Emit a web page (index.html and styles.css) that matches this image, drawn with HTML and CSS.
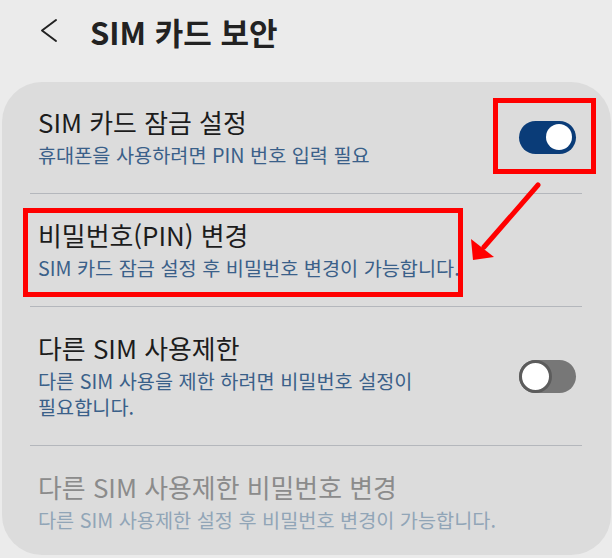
FILE: index.html
```html
<!DOCTYPE html>
<html lang="ko">
<head>
<meta charset="UTF-8" />
<title>SIM 카드 보안</title>
<link rel="stylesheet" href="styles.css">
</head>
<body>
<div class="screen">
    <div class="header">
        <svg class="back-icon" width="18" height="26" viewBox="0 0 18 26">
            <polyline points="16,2 2,12.5 16,23" fill="none" stroke="#222" stroke-width="2" stroke-linecap="round" stroke-linejoin="round"/>
        </svg>
        <h1>SIM 카드 보안</h1>
    </div>

    <div class="card">
        <div class="row">
            <div class="row-text">
                <div class="row-title">SIM 카드 잠금 설정</div>
                <div class="row-sub">휴대폰을 사용하려면 PIN 번호 입력 필요</div>
            </div>
            <div class="switch on"><span class="knob"></span></div>
        </div>
        <div class="row">
            <div class="row-text">
                <div class="row-title">비밀번호(PIN) 변경</div>
                <div class="row-sub">SIM 카드 잠금 설정 후 비밀번호 변경이 가능합니다.</div>
            </div>
        </div>
        <div class="row">
            <div class="row-text narrow">
                <div class="row-title">다른 SIM 사용제한</div>
                <div class="row-sub">다른 SIM 사용을 제한 하려면 비밀번호 설정이 필요합니다.</div>
            </div>
            <div class="switch off"><span class="knob"></span></div>
        </div>
        <div class="row disabled">
            <div class="row-text">
                <div class="row-title">다른 SIM 사용제한 비밀번호 변경</div>
                <div class="row-sub">다른 SIM 사용제한 설정 후 비밀번호 변경이 가능합니다.</div>
            </div>
        </div>
    </div>

    <!-- red annotation marks drawn over the screenshot -->
    <svg class="marks" width="612" height="558" viewBox="0 0 612 558">
        <rect x="495.5" y="100.5" width="98" height="71" fill="none" stroke="#ff0000" stroke-width="5"/>
        <rect x="25.5" y="210.5" width="435" height="84" fill="none" stroke="#ff0000" stroke-width="5"/>
        <line x1="538" y1="185" x2="484" y2="247" stroke="#ff0000" stroke-width="5" stroke-linecap="round"/>
        <polygon points="473,260 471,239 494,257" fill="#ff0000"/>
    </svg>
</div>
</body>
</html>
```

FILE: styles.css
```css
* {margin: 0; padding: 0; box-sizing: border-box;}
body {
    font-family: "Noto Sans CJK KR", "Noto Sans", sans-serif;
    background: #ebebeb;
    color: #1c1c1c;
}
.screen {
    position: relative;
    width: 612px;
    height: 558px;
    overflow: hidden;
}
.header {
    height: 62px;
    display: flex;
    align-items: center;
    padding-left: 40px;
    gap: 32px;
}
.header h1 {
    font-size: 31px;
    font-weight: 700;
    color: #222;
    line-height: 1;
}
.card {
    margin: 20px 1px 0 2px;
    background: #dcdcdc;
    border-radius: 40px;
    padding: 0 29px 0 28px;
}
.row {
    display: flex;
    align-items: center;
    padding: 25px 6px 25px 8px;
    border-bottom: 1px solid #b4b7bc;
}
.row:first-child {padding-top: 24px;}
.row:last-child {
    border-bottom: none;
    padding-bottom: 22px;
}
.row-text {flex: 1;}
.row-text.narrow {padding-right: 60px;}
.row-title {
    font-size: 25.9px;
    line-height: 32px;
}
.row-sub {
    margin-top: 4px;
    font-size: 19.7px;
    line-height: 26px;
    color: #3a6089;
    word-break: keep-all;
}
.disabled .row-title {color: #8b8b8b;}
.disabled .row-sub {color: #91a5b7;}
.switch {
    width: 57px;
    height: 33px;
    border-radius: 17px;
    position: relative;
    flex-shrink: 0;
}
.switch.on {background: #0a3c78;}
.switch.off {background: #777;}
.switch .knob {
    position: absolute;
    border-radius: 50%;
    background: #fff;
}
.switch.on .knob {
    width: 26px;
    height: 26px;
    top: 3.5px;
    right: 4px;
}
.switch.off .knob {
    width: 33px;
    height: 33px;
    top: 0;
    left: 0;
    border: 3.5px solid #5c5c5c;
}
.marks {
    position: absolute;
    left: 0;
    top: 0;
    pointer-events: none;
}
```
